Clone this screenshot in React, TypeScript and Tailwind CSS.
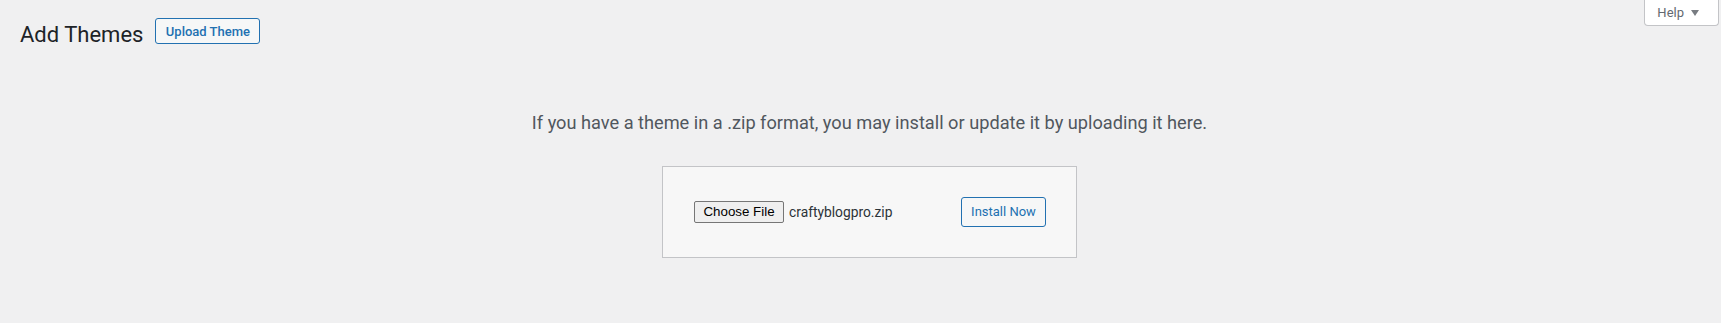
import React from "react";

export default function App() {
  return (
    <div className="w-full min-h-[323px] bg-[#f0f0f1] pl-[20px] pr-[2px] font-['Roboto',sans-serif] text-[#3c434a]">
      <div className="flex justify-between items-start">
        <div className="flex items-start">
          <h1 className="mt-[20px] text-[22px] leading-[30px] font-normal text-[#1d2327]">Add Themes</h1>
          <button className="ml-[12px] mt-[18px] h-[26px] w-[105px] rounded-[3px] border border-[#2271b1] bg-[#f6f7f7] text-[13px] font-medium leading-none text-[#2271b1]">
            Upload Theme
          </button>
        </div>
        <div className="w-[75px] h-[26px] bg-white border border-t-0 border-[#c3c4c7] rounded-b-[4px] flex items-center justify-end pr-[19px] gap-[7px] text-[13px] text-[#646970]">
          <span>Help</span>
          <svg width="8" height="6" viewBox="0 0 8 6" className="mt-[1px]">
            <path d="M0 0 L8 0 L4 6 Z" fill="#787c82" />
          </svg>
        </div>
      </div>
      <p className="mt-[61px] text-center text-[18.2px] leading-[24px] text-[#50575e]">
        If you have a theme in a .zip format, you may install or update it by uploading it here.
      </p>
      <div className="mt-[31px] flex justify-center">
        <div className="w-[415px] h-[92px] bg-[#f7f7f7] border border-[#c3c4c7] flex items-center justify-between pl-[31px] pr-[30px]">
          <div className="flex items-center gap-[5px]">
            <span className="w-[90px] h-[22px] flex items-center justify-center bg-[#efefef] border border-[#767676] rounded-[2px] font-['Liberation_Sans',Arial,sans-serif] text-[13.33px] text-black">
              Choose File
            </span>
            <span className="text-[13.8px] text-[#2c3338]">craftyblogpro.zip</span>
          </div>
          <button className="w-[85px] h-[30px] rounded-[3px] border border-[#2271b1] bg-[#f6f7f7] text-[13px] text-[#2271b1]">
            Install Now
          </button>
        </div>
      </div>
    </div>
  );
}
